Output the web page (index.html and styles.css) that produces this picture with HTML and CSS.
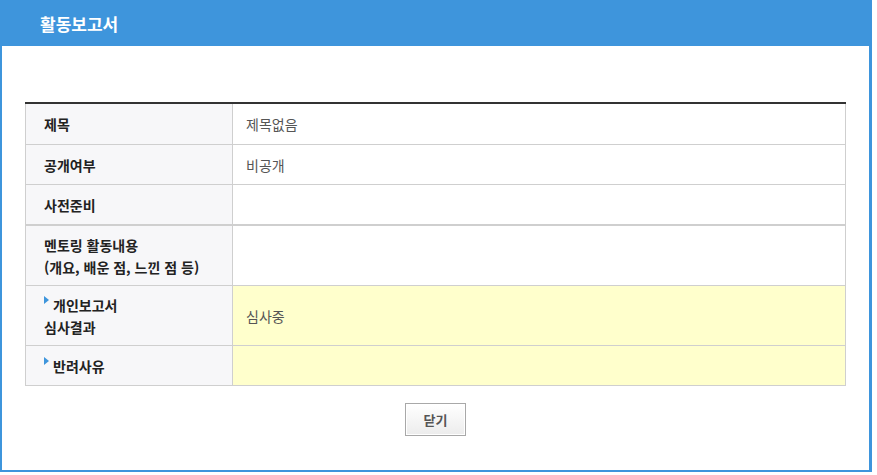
FILE: index.html
```html
<!DOCTYPE html>
<html lang="ko">
<head>
<meta charset="utf-8">
<title>활동보고서</title>
<link rel="stylesheet" href="styles.css">
</head>
<body>
<div class="window">
  <div class="header"><h1 class="title">활동보고서</h1></div>
  <div class="content">
    <table class="report">
      <tr class="row row-first">
        <th class="label">제목</th>
        <td class="value">제목없음</td>
      </tr>
      <tr class="row">
        <th class="label">공개여부</th>
        <td class="value">비공개</td>
      </tr>
      <tr class="row row-sep">
        <th class="label">사전준비</th>
        <td class="value"></td>
      </tr>
      <tr class="row row-tall">
        <th class="label">멘토링 활동내용<br>(개요, 배운 점, 느낀 점 등)</th>
        <td class="value"></td>
      </tr>
      <tr class="row row-tall">
        <th class="label"><span class="mark"></span>개인보고서<br>심사결과</th>
        <td class="value hl">심사중</td>
      </tr>
      <tr class="row">
        <th class="label"><span class="mark"></span>반려사유</th>
        <td class="value hl"></td>
      </tr>
    </table>
    <div class="actions">
      <button class="btn" type="button">닫기</button>
    </div>
  </div>
</div>
</body>
</html>
```

FILE: styles.css
```css
html, body {
  margin: 0;
  padding: 0;
  background: #ffffff;
}
body {
  font-family: "Noto Sans CJK KR", "Noto Sans", sans-serif;
}
.window {
  width: 872px;
  height: 472px;
  background: #3e95dc;
  display: flex;
  flex-direction: column;
}
.header {
  height: 46px;
  flex: none;
  display: flex;
  align-items: center;
  padding-left: 40px;
}
.title {
  margin: 0;
  color: #ffffff;
  font-size: 17px;
  font-weight: 700;
  line-height: 20px;
  letter-spacing: 0;
  position: relative;
  top: 1px;
}
.content {
  flex: 1;
  background: #ffffff;
  margin: 0 3px 2px 2px;
  padding: 56px 23px 0 23px;
}
.report {
  width: 821px;
  border-collapse: collapse;
  border-top: 2px solid #333333;
  table-layout: fixed;
}
.row > .label,
.row > .value {
  border: 1px solid #cfcfcf;
  height: 39px;
  padding: 0;
  font-size: 14px;
  line-height: 22px;
  text-align: left;
  vertical-align: middle;
}
.row-first > .label,
.row-first > .value {
  height: 40px;
}
.row > .label {
  width: 188px;
  padding-left: 18px;
  background: #f7f7f9;
  color: #222222;
  font-weight: 700;
}
.row > .value {
  padding-left: 13px;
  color: #555555;
  font-weight: 400;
}
.row-sep > .label,
.row-sep > .value {
  border-bottom-width: 2px;
}
.row-tall > .label,
.row-tall > .value {
  height: 59px;
}
.value.hl {
  background: #ffffcc;
}
.mark {
  display: inline-block;
  width: 0;
  height: 0;
  border-left: 5px solid #3e95dc;
  border-top: 4px solid transparent;
  border-bottom: 4px solid transparent;
  margin-right: 4px;
  vertical-align: 7px;
}
.actions {
  display: flex;
  justify-content: center;
  padding-top: 17px;
}
.btn {
  width: 61px;
  height: 33px;
  border: 1px solid #a8a8a8;
  background: linear-gradient(#ffffff, #ececec);
  box-shadow: inset 0 0 0 1px #ffffff;
  color: #555555;
  font-family: "Noto Sans CJK KR", "Noto Sans", sans-serif;
  font-size: 13px;
  font-weight: 700;
  padding: 0;
}
```
